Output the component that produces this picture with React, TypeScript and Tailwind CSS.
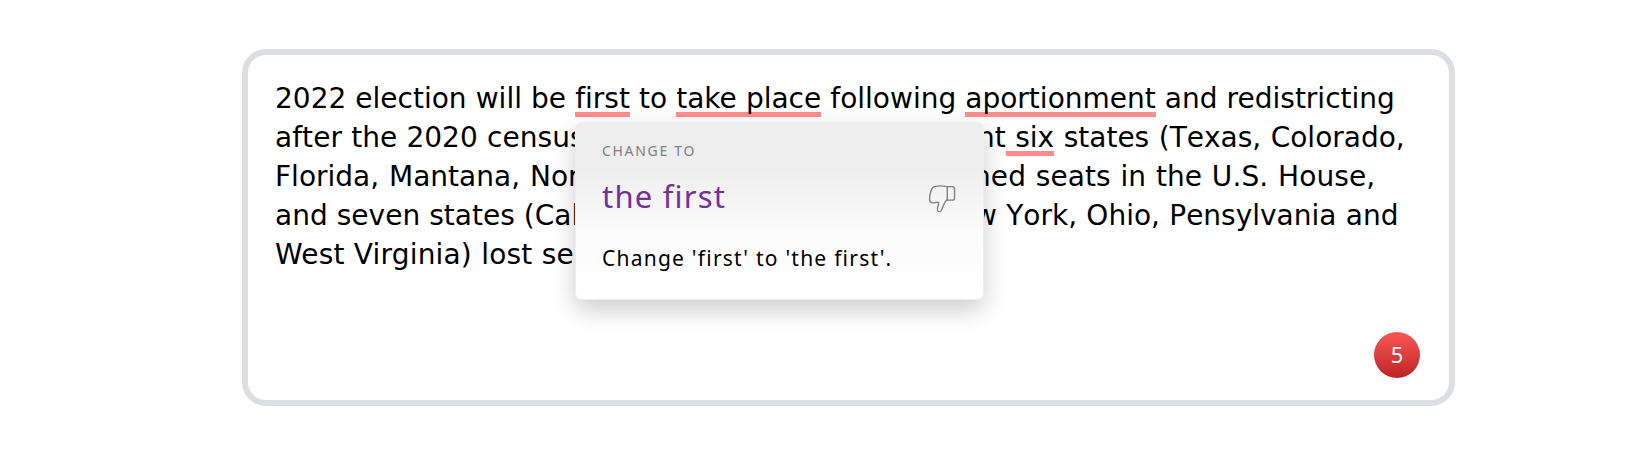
import type { ReactNode } from "react";

function Mark({ children }: { children: ReactNode }) {
    return (
        <span className="relative whitespace-pre">
            <span className="absolute inset-x-0 bottom-[-2px] h-[5px] bg-[#ff8d8d]" />
            <span className="relative">{children}</span>
        </span>
    )
}

function ThumbsDown() {
    return (
        <svg className="w-[28px] h-[28px]" viewBox="0 0 28 28" fill="none" stroke="#808080" strokeWidth="1.4" strokeLinecap="round" strokeLinejoin="round">
            <path d="M18.5 1.6C15.5 .9 10 .8 7 1.4C4.6 1.8 4 3 3.1 5.5C2.1 8.4 1.5 12 1.6 14.3C1.7 16.7 3 17.9 5 17.9C6.8 17.9 8 17.3 9.3 17.3C10.8 17.3 10.9 18.3 10.3 20C9.5 22.3 8.9 24.4 9.8 25.8C10.8 27.2 13 26.9 13.8 24.8C14.8 21.9 16 17.7 18.5 15.2" />
            <path d="M19.2 1.6H24.5C25.8 1.6 26.5 2.2 26.5 3.4V13.2C26.5 14.5 25.8 15.1 24.5 15.1H18.6" />
            <path d="M19.3 1.6V14.8" />
        </svg>
    )
}

export default function App() {
    return (
        <div className="h-[460px] bg-white pt-[49px] pl-[242px] text-black">
            <div className="relative w-[1213px] h-[357px] border-[6px] border-[#dddee3] rounded-[24px] pl-[27px] pt-[24px]">

                <div className="font-['DejaVu_Sans',sans-serif] text-[28px] leading-[39px] [word-spacing:0.2px] [font-variant-ligatures:none] whitespace-pre">
                    <div>
                        2022 election will be <Mark>first</Mark> to <Mark>take place</Mark> following <Mark>aportionment</Mark> and redistricting
                    </div>
                    <div className="flex [font-kerning:none]">
                        <span className="w-[702px] tracking-[0.05px]">after the 2020 census</span>
                        <span className="[word-spacing:0.6px]">nt<Mark> six</Mark> states (Texas, Colorado,</span>
                    </div>
                    <div className="flex [font-kerning:none]">
                        <span className="w-[698px] [word-spacing:1px]">Florida, Mantana, Nor</span>
                        <span className="tracking-[0.1px] [word-spacing:0.7px]">ned seats in the U.S. House,</span>
                    </div>
                    <div className="flex [font-kerning:none]">
                        <span className="w-[699px]">and seven states (Cal</span>
                        <span className="[word-spacing:0.4px]">w York, Ohio, Pensylvania and</span>
                    </div>
                    <div className="tracking-[0.18px]">West Virginia) lost se</div>
                </div>

                <div className="absolute left-[327px] top-[67px] w-[409px] h-[178px] rounded-[7px] border border-[#ededed] bg-linear-to-b from-[#eeeeee] from-25% via-[#fbfbfb] via-62% to-white shadow-[0_10px_24px_rgba(0,0,0,0.2)] px-[26px] pt-[18px] font-['Noto_Sans',sans-serif] [font-variant-ligatures:none]">
                    <div className="text-[14px] leading-[20px] tracking-[1.7px] text-[#808080]">CHANGE TO</div>
                    <div className="flex items-center justify-between mt-[13px]">
                        <span className="text-[31px] leading-[44px] tracking-[1.2px] text-[#73309a]">the first</span>
                        <div className="pt-[5px] pr-px">
                            <ThumbsDown />
                        </div>
                    </div>
                    <div className="mt-[25px] text-[21px] leading-[30px] tracking-[1.23px]">Change 'first' to 'the first'.</div>
                </div>

                <div className="absolute right-[29px] bottom-[22px] flex items-center justify-center size-[46px] rounded-full bg-linear-to-b from-[#fb5656] to-[#bb2424] text-white text-[22px] leading-[30px] pb-[2px] font-['Noto_Sans',sans-serif]">
                    5
                </div>
            </div>
        </div>
    )
}
